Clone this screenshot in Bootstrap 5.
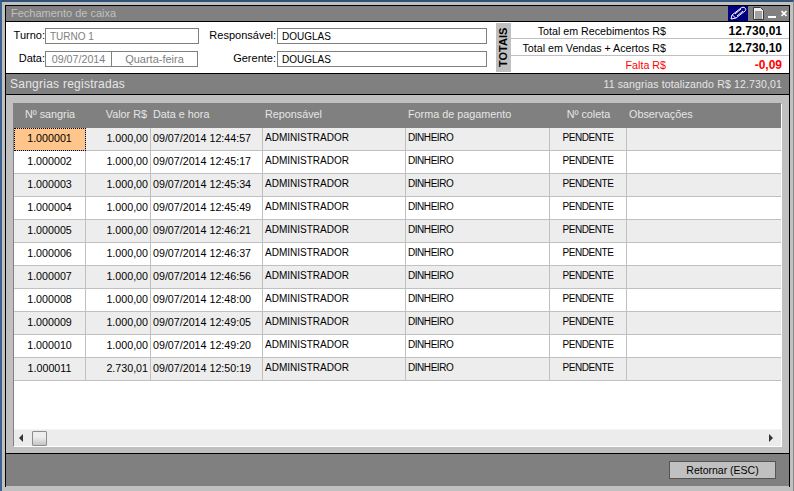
<!DOCTYPE html>
<html lang="pt-BR">
<head>
  <meta charset="UTF-8" />
  <meta name="viewport" content="width=device-width, initial-scale=1" />
  <title>Fechamento de caixa</title>
  <link href="https://cdn.jsdelivr.net/npm/bootstrap@5.3.0/dist/css/bootstrap.min.css" rel="stylesheet" />
  <style>
    html, body { height: 491px; overflow: hidden; }
    body {
      font-family: "Liberation Sans", Arial, sans-serif;
      font-size: 11px;
      color: #000;
      background: #c0c0c0;
    }
    /* window frame */
    .desk-edge {
      height: 491px;
      border-top: 2px solid #2f5378;
      border-left: 2px solid #3a6390;
      border-right: 1px solid #8a8a8a;
      background: #c0c0c0;
      padding: 3px 3px 4px 3px;
    }
    .win-box {
      height: 482px;
      border: 1px solid #000;
      border-bottom: 0;
      background: #c0c0c0;
    }
    .title-bar {
      height: 15px;
      background: #808080;
      color: #c0c0c0;
      font-size: 11px;
      line-height: 15px;
      padding-left: 5px;
    }
    .tool-pen { width: 20px; height: 15px; margin-left: 5px; background: #000080; }
    .tool-doc { width: 11px; height: 15px; margin: 0 4px 0 5px; }
    .tool-min { width: 8px; height: 15px; margin-right: 5px; }
    .tool-close { width: 6px; height: 15px; margin-right: 2px; }

    /* header form */
    .head-area {
      height: 53px;
      background: #fff;
      border-top: 1px solid #000;
      border-bottom: 1px solid #000;
    }
    .form-side { width: 490px; padding-top: 6px; }
    .form-line { height: 16px; margin-bottom: 7px; font-size: 11px; }
    .lbl-a { width: 39px; text-align: right; line-height: 14px; }
    .lbl-b { width: 77px; text-align: right; line-height: 14px; }
    .fake-input {
      height: 16px;
      border: 1px solid #808080;
      background: #fff;
      line-height: 15px;
      padding-left: 4px;
      white-space: nowrap;
      font-size: 10px;
    }
    .fake-input.off { color: #808080; }
    .f-turno { width: 154px; }
    .f-date { width: 67px; text-align: center; padding-left: 0; font-size: 10.7px; }
    .f-day { width: 87px; margin-left: -1px; text-align: center; padding-left: 0; font-size: 11px; }
    .f-person { width: 210px; margin-left: 1px; }
    .lbl-b.wide { width: 78px; }

    .totals-tag {
      width: 15px;
      margin: 1px 0;
      background: #c0c0c0;
      font-size: 11px;
      font-weight: 700;
      writing-mode: vertical-rl;
      transform: rotate(180deg);
      text-align: center;
      line-height: 15px;
    }
    .totals-side { width: 278px; }
    .total-line {
      height: 17px;
      border-bottom: 1px solid #c0c0c0;
      line-height: 15px;
      padding: 2px 7px 0 0;
    }
    .total-line:last-child { border-bottom: 0; height: 16px; }
    .total-name { width: 155px; text-align: right; font-size: 10.7px; white-space: nowrap; }
    .total-val { font-size: 12px; font-weight: 700; margin-left: auto; }
    .is-red { color: #f00; }

    .group-bar {
      height: 21px;
      background: #808080;
      border-bottom: 1px solid #000;
      color: #e6e6e6;
      padding: 0 7px 0 4px;
      line-height: 20px;
    }
    .group-title { font-size: 12px; letter-spacing: .25px; }
    .group-info { font-size: 10.5px; letter-spacing: .15px; }

    /* grid */
    .grid-area { height: 358px; padding: 8px 7px 0; }
    .grid-box {
      height: 344px;
      background: #fff;
      border-top: 1px solid #808080;
      border-left: 1px solid #808080;
      border-right: 1px solid #fff;
      border-bottom: 1px solid #fff;
    }
    .grid-rows { height: 325px; overflow: hidden; }
    .grid-table { table-layout: fixed; width: 767px; margin: 0; border-collapse: separate; border-spacing: 0; }
    .grid-table th:nth-child(1) { width: 72px; }
    .grid-table th:nth-child(2) { width: 65px; }
    .grid-table th:nth-child(3) { width: 112px; }
    .grid-table th:nth-child(4) { width: 143px; }
    .grid-table th:nth-child(5) { width: 144px; }
    .grid-table th:nth-child(6) { width: 77px; }
    .grid-table th:nth-child(7) { width: 154px; }
    .grid-table th {
      height: 24px;
      background: #808080;
      color: #e6e6e6;
      font-weight: 400;
      font-size: 10.8px;
      padding: 0 2px 3px;
      border: 0;
      white-space: nowrap;
    }
    .grid-table th.text-end { padding-right: 4px; }
    .grid-table td {
      height: 23px;
      padding: 0 2px 3px;
      border-bottom: 1px solid #c0c0c0;
      border-right: 1px solid #c0c0c0;
      background: #fff;
      white-space: nowrap;
      overflow: hidden;
      line-height: 18px;
      font-size: 10.7px;
    }
    .grid-table td.caps { font-size: 10px; }
    .grid-table td.caps-tight { font-size: 10px; letter-spacing: -.45px; }
    .grid-table tbody tr:nth-child(odd) td { background: #ededed; }
    .grid-table td:last-child { border-right: 0; }
    .grid-table tbody tr:first-child td.is-current {
      background: #ffc58a;
      outline: 1px dotted #000;
      outline-offset: -1px;
    }
    .scroll-h {
      height: 17px;
      background: #ececec;
      border-top: 1px solid #f4f4f4;
      padding: 0 8px 0 5px;
    }
    .scroll-thumb {
      width: 15px;
      height: 15px;
      margin-left: 8px;
      border: 1px solid #8e8e8e;
      border-radius: 1px;
      background: linear-gradient(#eeeeee 0 40%, #c4c4c4 100%);
    }
    .foot-bar {
      height: 33px;
      background: #808080;
      border-top: 1px solid #000;
      padding: 7px 13px 0 0;
    }
    .back-btn {
      width: 107px;
      height: 18px;
      padding: 0;
      border: 1px solid #555;
      border-radius: 0;
      background: #c0c0c0;
      color: #000;
      font-size: 10.5px;
      line-height: 15px;
    }
  </style>
</head>
<body>
  <div class="desk-edge">
    <div class="win-box">
      <!-- title bar -->
      <div class="title-bar d-flex align-items-center">
        <span class="flex-grow-1">Fechamento de caixa</span>
        <div class="tool-pen d-flex">
          <svg width="20" height="15" viewBox="0 0 20 15" fill="none" stroke="#fff" stroke-width="1">
            <path d="M3 13l1-4 9-7c1-1 3-1 4 0s1 2 0 3l-9 7z" />
            <path d="M4.500 9l3 3M7 8l6-5M9 10l6-5" />
          </svg>
        </div>
        <div class="tool-doc d-flex">
          <svg width="11" height="15" viewBox="0 0 11 15">
            <path d="M.5 1.500h7l3 3v9h-10z" fill="#f0f0f0" stroke="#3a3a3a" />
            <path d="M2 6h7M2 8h7M2 10h7M2 12h7" stroke="#555" />
          </svg>
        </div>
        <div class="tool-min d-flex">
          <svg width="8" height="15" viewBox="0 0 8 15"><path d="M0 11h8" stroke="#fff" stroke-width="2" /></svg>
        </div>
        <div class="tool-close d-flex">
          <svg width="6" height="15" viewBox="0 0 6 15"><path d="M.5 5l5 5M5.500 5l-5 5" stroke="#fff" stroke-width="1.700" /></svg>
        </div>
      </div>

      <!-- shift data and totals -->
      <div class="head-area d-flex">
        <div class="form-side">
          <div class="form-line d-flex">
            <span class="lbl-a">Turno:</span>
            <div class="fake-input off f-turno">TURNO 1</div>
            <span class="lbl-b">Responsável:</span>
            <div class="fake-input f-person">DOUGLAS</div>
          </div>
          <div class="form-line d-flex">
            <span class="lbl-a">Data:</span>
            <div class="fake-input off f-date">09/07/2014</div>
            <div class="fake-input off f-day">Quarta-feira</div>
            <span class="lbl-b wide">Gerente:</span>
            <div class="fake-input f-person">DOUGLAS</div>
          </div>
        </div>
        <div class="totals-tag">TOTAIS</div>
        <div class="totals-side">
          <div class="total-line d-flex"><span class="total-name">Total em Recebimentos R$</span><span class="total-val">12.730,01</span></div>
          <div class="total-line d-flex"><span class="total-name">Total em Vendas + Acertos R$</span><span class="total-val">12.730,10</span></div>
          <div class="total-line d-flex is-red"><span class="total-name">Falta R$</span><span class="total-val">-0,09</span></div>
        </div>
      </div>

      <div class="group-bar d-flex justify-content-between">
        <span class="group-title">Sangrias registradas</span>
        <span class="group-info">11 sangrias totalizando R$ 12.730,01</span>
      </div>

      <!-- grid -->
      <div class="grid-area">
        <div class="grid-box">
          <div class="grid-rows">
            <table class="grid-table">
              <thead>
                <tr>
                  <th class="text-center">Nº sangria</th>
                  <th class="text-end">Valor R$</th>
                  <th>Data e hora</th>
                  <th>Reponsável</th>
                  <th>Forma de pagamento</th>
                  <th class="text-center">Nº coleta</th>
                  <th>Observações</th>
                </tr>
              </thead>
              <tbody id="rows"></tbody>
            </table>
          </div>
          <div class="scroll-h d-flex align-items-center">
            <svg width="5" height="8" viewBox="0 0 5 8"><path d="M4 0v8L0 4z" fill="#333" /></svg>
            <div class="scroll-thumb"></div>
            <svg class="ms-auto" width="5" height="8" viewBox="0 0 5 8"><path d="M1 0v8l4-4z" fill="#333" /></svg>
          </div>
        </div>
      </div>

      <div class="foot-bar d-flex justify-content-end">
        <button type="button" class="btn back-btn">Retornar (ESC)</button>
      </div>
    </div>
  </div>

  <script src="https://cdn.jsdelivr.net/npm/bootstrap@5.3.0/dist/js/bootstrap.bundle.min.js"></script>
  <script>
    const data = [
      ['1.000001', '1.000,00', '12:44:57'],
      ['1.000002', '1.000,00', '12:45:17'],
      ['1.000003', '1.000,00', '12:45:34'],
      ['1.000004', '1.000,00', '12:45:49'],
      ['1.000005', '1.000,00', '12:46:21'],
      ['1.000006', '1.000,00', '12:46:37'],
      ['1.000007', '1.000,00', '12:46:56'],
      ['1.000008', '1.000,00', '12:48:00'],
      ['1.000009', '1.000,00', '12:49:05'],
      ['1.000010', '1.000,00', '12:49:20'],
      ['1.000011', '2.730,01', '12:50:19'],
    ];
    document.getElementById('rows').innerHTML = data.map((r, i) =>
      '<tr>' +
      '<td class="text-center' + (i === 0 ? ' is-current' : '') + '">' + r[0] + '</td>' +
      '<td class="text-end">' + r[1] + '</td>' +
      '<td>09/07/2014 ' + r[2] + '</td>' +
      '<td class="caps">ADMINISTRADOR</td><td class="caps-tight">DINHEIRO</td>' +
      '<td class="text-center caps-tight">PENDENTE</td><td></td></tr>'
    ).join('');
  </script>
</body>
</html>
